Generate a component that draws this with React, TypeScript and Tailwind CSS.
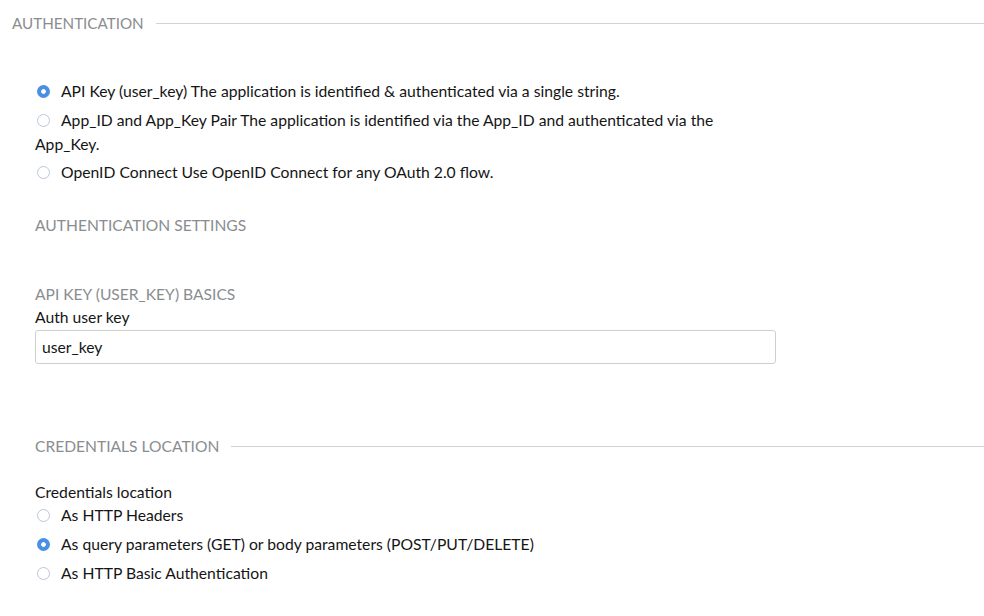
import React from "react";

function Radio({ checked }: { checked?: boolean }) {
  return checked ? (
    <span className="inline-block h-[13px] w-[13px] rounded-full bg-[radial-gradient(circle,#ffffff_2px,#4a90e2_2.6px)] align-[-1px] mr-[11px] ml-[2px]" />
  ) : (
    <span className="inline-block h-[13px] w-[13px] rounded-full border border-[#bcc6da] bg-white align-[-1px] mr-[11px] ml-[2px]" />
  );
}

function Legend({ text, pl, size }: { text: string; pl: string; size: string }) {
  return (
    <div className={`flex items-center h-[24px] ${pl}`}>
      <span className={`${size} text-[#8a8d90] whitespace-nowrap`}>{text}</span>
      <span className="ml-[12px] h-px flex-1 bg-[#d2d2d2]" />
    </div>
  );
}

export default function App() {
  return (
    <div className="w-[984px] h-[616px] bg-white text-[#151515] text-[15.7px] leading-[24px]" style={{ fontFamily: "Lato, 'Open Sans', sans-serif" }}>
      <div className="pt-[11px]">
        <Legend text="AUTHENTICATION" pl="pl-[12px]" size="text-[15.2px]" />
      </div>
      <div className="pl-[35px] w-[775px] pt-[44px]">
        <div>
          <Radio checked />
          API Key (user_key) The application is identified &amp; authenticated via a single string.
        </div>
        <div className="mt-[5px]">
          <Radio />
          App_ID and App_Key Pair The application is identified via the App_ID and authenticated via the App_Key.
        </div>
        <div className="mt-[4px]">
          <Radio />
          OpenID Connect Use OpenID Connect for any OAuth 2.0 flow.
        </div>
        <div className="mt-[29px] text-[15.6px] text-[#8a8d90]">AUTHENTICATION SETTINGS</div>
        <div className="mt-[45px] text-[15.6px] text-[#8a8d90]">API KEY (USER_KEY) BASICS</div>
        <div className="-mt-[1px]">Auth user key</div>
        <div className="mt-[1px] h-[34px] w-[741px] rounded-[3px] border border-[#cfcfcf] px-[6px] flex items-center">
          user_key
        </div>
      </div>
      <div className="pt-[70px] pl-[35px]">
        <Legend text="CREDENTIALS LOCATION" pl="" size="text-[15.6px]" />
      </div>
      <div className="pl-[35px] pt-[22px]">
        <div>Credentials location</div>
        <div className="mt-[-1px]">
          <Radio />
          As HTTP Headers
        </div>
        <div className="mt-[5px]">
          <Radio checked />
          As query parameters (GET) or body parameters (POST/PUT/DELETE)
        </div>
        <div className="mt-[5px]">
          <Radio />
          As HTTP Basic Authentication
        </div>
      </div>
    </div>
  );
}
